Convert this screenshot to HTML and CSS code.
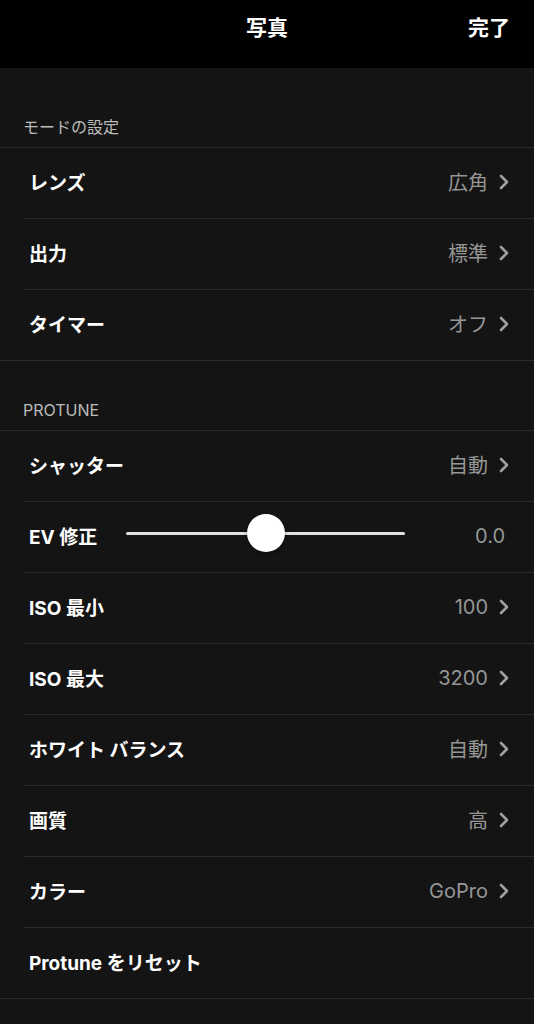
FILE: index.html
```html
<!DOCTYPE html>
<html lang="ja">

<head>
    <meta charset="UTF-8">
    <meta name="viewport" content="width=device-width, initial-scale=1.0">
    <title>写真</title>
    <link rel="stylesheet" href="styles.css">
</head>

<body>
    <div class="header">
        <div class="title">写真</div>
        <div class="done">完了</div>
    </div>

    <div class="content">
        <div class="group">
            <div class="section-head">モードの設定</div>
            <div class="row">
                <span class="label">レンズ</span>
                <span class="value">広角</span>
                <svg class="chev" viewBox="0 0 10 16"><polyline points="2,2 8,8 2,14" /></svg>
            </div>
            <div class="row">
                <span class="label">出力</span>
                <span class="value">標準</span>
                <svg class="chev" viewBox="0 0 10 16"><polyline points="2,2 8,8 2,14" /></svg>
            </div>
            <div class="row">
                <span class="label">タイマー</span>
                <span class="value">オフ</span>
                <svg class="chev" viewBox="0 0 10 16"><polyline points="2,2 8,8 2,14" /></svg>
            </div>
        </div>

        <div class="group">
            <div class="section-head">PROTUNE</div>
            <div class="row">
                <span class="label">シャッター</span>
                <span class="value">自動</span>
                <svg class="chev" viewBox="0 0 10 16"><polyline points="2,2 8,8 2,14" /></svg>
            </div>
            <div class="row">
                <span class="label ev-label">EV 修正</span>
                <div class="slider">
                    <div class="track"></div>
                    <div class="thumb"></div>
                </div>
                <span class="value ev-value">0.0</span>
            </div>
            <div class="row">
                <span class="label">ISO 最小</span>
                <span class="value">100</span>
                <svg class="chev" viewBox="0 0 10 16"><polyline points="2,2 8,8 2,14" /></svg>
            </div>
            <div class="row">
                <span class="label">ISO 最大</span>
                <span class="value">3200</span>
                <svg class="chev" viewBox="0 0 10 16"><polyline points="2,2 8,8 2,14" /></svg>
            </div>
            <div class="row">
                <span class="label">ホワイト バランス</span>
                <span class="value">自動</span>
                <svg class="chev" viewBox="0 0 10 16"><polyline points="2,2 8,8 2,14" /></svg>
            </div>
            <div class="row">
                <span class="label">画質</span>
                <span class="value">高</span>
                <svg class="chev" viewBox="0 0 10 16"><polyline points="2,2 8,8 2,14" /></svg>
            </div>
            <div class="row">
                <span class="label">カラー</span>
                <span class="value">GoPro</span>
                <svg class="chev" viewBox="0 0 10 16"><polyline points="2,2 8,8 2,14" /></svg>
            </div>
            <div class="row">
                <span class="label">Protune をリセット</span>
            </div>
        </div>
    </div>
</body>

</html>
```

FILE: styles.css
```css
* {
    margin: 0;
    padding: 0;
    box-sizing: border-box;
}

body {
    background-color: #141414;
    color: #fff;
    font-family: Inter, "Noto Sans CJK JP", sans-serif;
    width: 534px;
    height: 1024px;
    overflow: hidden;
}

.header {
    height: 68px;
    background-color: #000;
    position: relative;
    padding-top: 15px;
    text-align: center;
}

.title {
    font-size: 21px;
    font-weight: 700;
    line-height: 26px;
}

.done {
    position: absolute;
    right: 24px;
    top: 15px;
    font-size: 21px;
    font-weight: 700;
    line-height: 26px;
}

.content {
    padding-top: 10px;
}

.group {
    border-bottom: 1px solid #2a2a2a;
}

.section-head {
    height: 70px;
    display: flex;
    align-items: flex-end;
    padding: 0 0 9px 23px;
    border-bottom: 1px solid #2a2a2a;
    font-size: 16px;
    line-height: 22px;
    color: #bcbcbc;
}

.row {
    height: 71px;
    margin-left: 23px;
    padding: 0 25px 3px 6px;
    display: flex;
    align-items: center;
    border-bottom: 1px solid #2a2a2a;
}

.row:last-child {
    border-bottom: none;
    height: 70px;
}

.label {
    font-size: 19px;
    font-weight: 700;
    flex: 1;
}

.value {
    font-size: 20px;
    color: #969696;
}

.chev {
    width: 10px;
    height: 16px;
    margin-left: 11px;
    fill: none;
    stroke: #a0a0a0;
    stroke-width: 2.6;
    stroke-linecap: round;
    stroke-linejoin: round;
}

.ev-label {
    flex: none;
    width: 97px;
}

.slider {
    position: relative;
    width: 279px;
    height: 40px;
    margin-bottom: 6px;
}

.track {
    position: absolute;
    left: 0;
    right: 0;
    top: 19px;
    height: 3px;
    border-radius: 2px;
    background-color: #e2e2e2;
}

.thumb {
    position: absolute;
    left: 121px;
    top: 1px;
    width: 38px;
    height: 38px;
    border-radius: 50%;
    background-color: #fff;
    box-shadow: 0 2px 4px rgba(0, 0, 0, 0.4);
}

.ev-value {
    flex: 1;
    text-align: right;
    margin-right: 4px;
}
```
